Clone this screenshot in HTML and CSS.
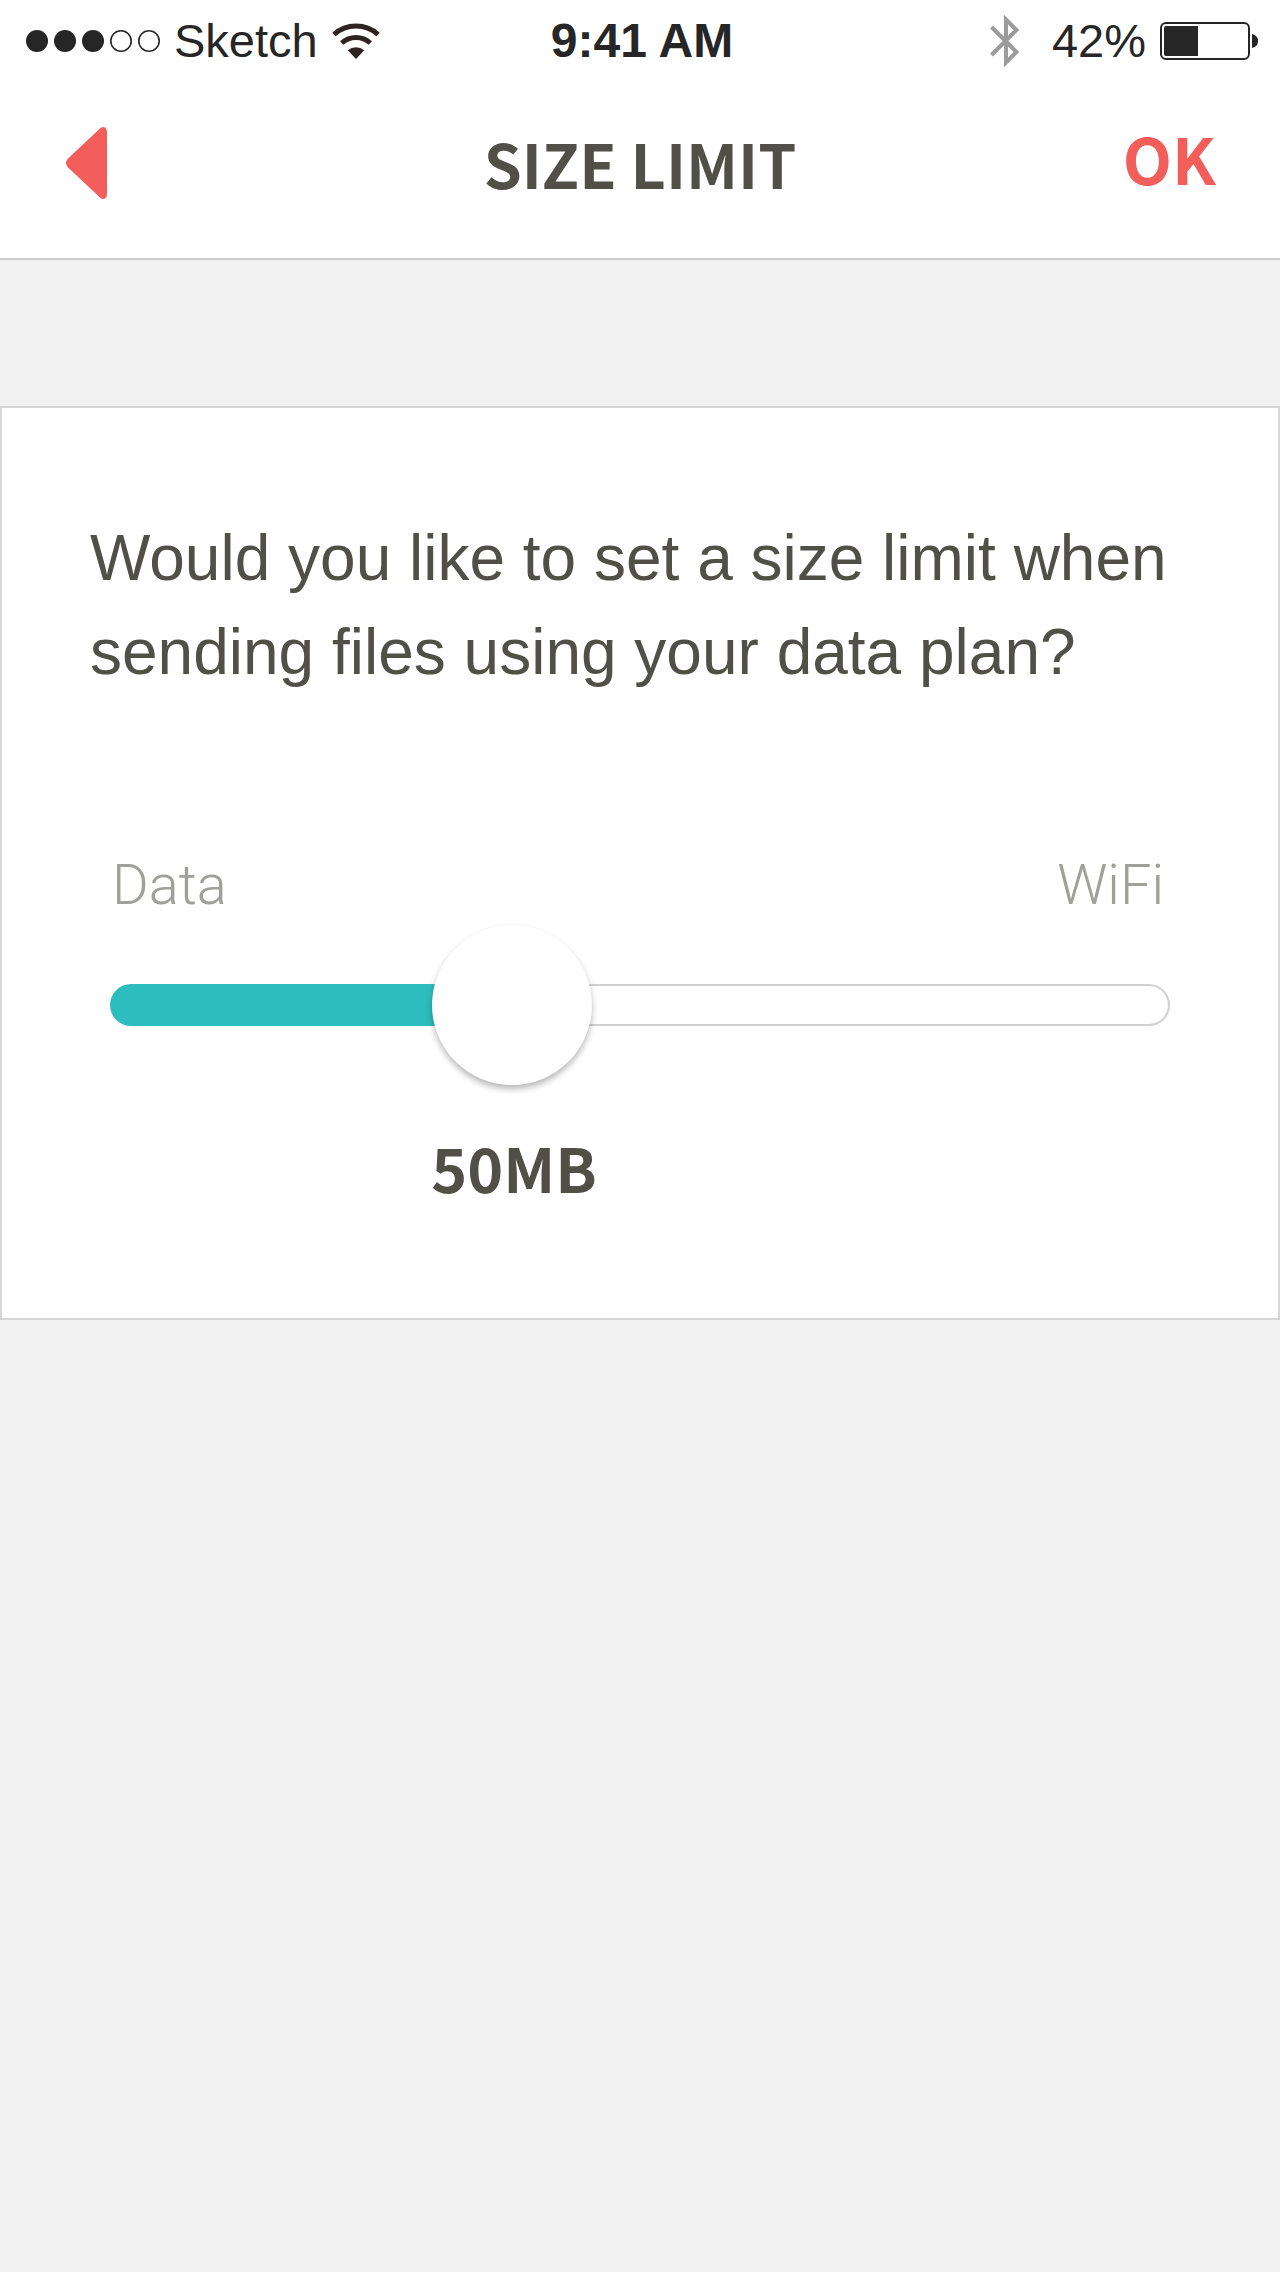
FILE: index.html
```html
<!DOCTYPE html>
<html lang="en">
<head>
  <meta charset="utf-8">
  <meta name="viewport" content="width=device-width, initial-scale=1">
  <title>Size limit</title>
  <link rel="stylesheet" href="styles.css">
</head>
<body>
  <header class="header">
    <div class="status">
      <div class="status-left">
        <svg class="signal" width="134" height="22" viewBox="0 0 134 22" role="img" aria-label="Signal 3 of 5">
          <g fill="#262626">
            <circle cx="11" cy="11" r="11"/>
            <circle cx="39" cy="11" r="11"/>
            <circle cx="67" cy="11" r="11"/>
          </g>
          <g fill="none" stroke="#262626" stroke-width="1.6">
            <circle cx="95" cy="11" r="10.2"/>
            <circle cx="123" cy="11" r="10.2"/>
          </g>
        </svg>
        <span>Sketch</span>
        <svg class="wifi" width="48" height="36" viewBox="0 0 48 36" role="img" aria-label="WiFi">
          <g fill="none" stroke="#2e2323" stroke-width="5">
            <path d="M2 11.5 A33 33 0 0 1 46 11.5"/>
            <path d="M9.700 20 A21.500 21.500 0 0 1 38.300 20"/>
          </g>
          <path d="M24 36 L15.800 27.300 A12.500 12.500 0 0 1 32.200 27.300 Z" fill="#2e2323"/>
        </svg>
      </div>
      <time class="clock">9:41 AM</time>
      <div class="status-right">
        <svg class="bluetooth" width="30" height="52" viewBox="0 0 30 52" role="img" aria-label="Bluetooth">
          <path d="M1.500 12 L26.500 37 L16 47.500 V4.500 L26.500 15 L1.500 40" fill="none" stroke="#9b9b9b" stroke-width="4"/>
        </svg>
        <span>42%</span>
        <svg class="battery" width="98" height="38" viewBox="0 0 98 38" role="img" aria-label="Battery">
          <rect x="1" y="1" width="88" height="36" rx="5" fill="none" stroke="#262626" stroke-width="2"/>
          <path d="M38 4 V34 H6 Q4 34 4 32 V6 Q4 4 6 4 Z" fill="#262626"/>
          <path d="M92 12 Q98 13.500 98 19 Q98 24.500 92 26 Z" fill="#262626"/>
        </svg>
      </div>
    </div>
    <nav class="nav">
      <button class="back" type="button" aria-label="Back">
        <svg width="43" height="72" viewBox="-2 0 43 72" aria-hidden="true">
          <path d="M34.500 1 Q37 -0.500 39 0.500 Q41 2 41 5 V67 Q41 70 39 71.500 Q37 72.500 34.500 71 L2 40.500 Q-2 36 2 31.500 Z" fill="#f35e5a"/>
        </svg>
      </button>
      <h1 class="title">SIZE LIMIT</h1>
      <button class="ok" type="button">OK</button>
    </nav>
  </header>
  <main class="card">
    <p class="question">Would you like to set a size limit when sending files using your data plan?</p>
    <div class="limit" style="--ratio: 0.357">
      <div class="labels">
        <span>Data</span>
        <span>WiFi</span>
      </div>
      <input class="slider" id="limit" type="range" min="0" max="140" value="50" aria-label="Size limit in megabytes">
      <output class="value" for="limit">50MB</output>
    </div>
  </main>
  <script src="slider.js"></script>
</body>
</html>
```
FILE: styles.css
```css
* {
  box-sizing: border-box;
}

body {
  margin: 0;
  background: #f1f1f1;
  color: #515048;
  font-family: "Liberation Sans", Arial, sans-serif;
}

button {
  padding: 0;
  border: 0;
  background: none;
  cursor: pointer;
}

svg {
  display: block;
  flex: none;
}

.header {
  background: #fff;
  border-bottom: 2px solid #ccc;
}

.status {
  display: grid;
  grid-template-columns: 1fr auto 1fr;
  align-items: center;
  height: 82px;
  padding: 0 22px 0 26px;
  color: #262626;
  font-size: 47px;
  line-height: 52px;
}

.status-left,
.status-right {
  display: flex;
  align-items: center;
  gap: 14px;
}

.status-right {
  justify-content: flex-end;
}

.bluetooth {
  margin-right: 18px;
}

.clock {
  font-size: 48px;
  font-weight: 700;
}

.nav {
  display: grid;
  grid-template-columns: 1fr auto 1fr;
  align-items: center;
  padding: 37px 64px 51px;
}

.title,
.ok,
.value {
  font-family: "Noto Sans CJK JP", "Noto Sans CJK SC", sans-serif;
  font-weight: 700;
  line-height: 88px;
}

.title {
  margin: 0;
  font-size: 61px;
}

.back {
  justify-self: start;
}

.ok {
  justify-self: end;
  align-self: start;
  color: #f35e5a;
  font-size: 64px;
  line-height: 76px;
}

.card {
  margin-top: 146px;
  padding: 103px 88px 107px;
  background: #fff;
  border: 2px solid #d6d6d6;
}

.question {
  margin: 0;
  font-size: 64px;
  line-height: 94px;
}

.limit {
  margin: 154px 20px 0;
}

.labels {
  display: flex;
  justify-content: space-between;
  padding: 0 6px 0 2px;
  color: #a0a09a;
  font-family: Roboto, sans-serif;
  font-size: 56px;
  font-weight: 300;
  line-height: 64px;
}

.slider {
  display: block;
  width: 100%;
  height: 160px;
  margin: 8px 0 0;
  appearance: none;
  background: none;
}

.slider::-webkit-slider-runnable-track {
  height: 42px;
  border: 2px solid transparent;
  border-radius: 21px;
  background:
    linear-gradient(#2dbdbe, #2dbdbe) 0 0 / calc(80px + (100% - 160px) * var(--ratio)) 100% no-repeat border-box,
    linear-gradient(#fff, #fff) padding-box,
    linear-gradient(#d0d0d0, #d0d0d0) border-box;
}

.slider::-webkit-slider-thumb {
  width: 160px;
  height: 160px;
  margin-top: -61px;
  appearance: none;
  border-radius: 50%;
  background: #fff;
  box-shadow: 0 4px 6px rgba(0, 0, 0, 0.28);
}

.value {
  display: block;
  width: 160px;
  margin-top: 38px;
  margin-left: calc((100% - 160px) * var(--ratio));
  font-size: 61px;
  text-align: center;
}
```
FILE: slider.js
```js
const slider = document.querySelector('.slider');

slider.addEventListener('input', () => {
  slider.parentElement.style.setProperty('--ratio', slider.value / slider.max);
  document.querySelector('.value').textContent = slider.value + 'MB';
});
```
